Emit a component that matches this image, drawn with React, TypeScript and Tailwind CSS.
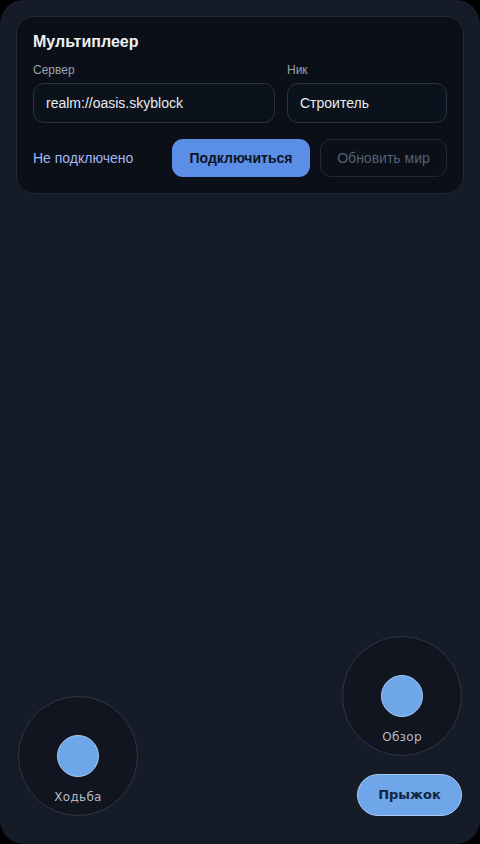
import React from "react";

function Joystick({ label }: { label: string }) {
  return (
    <div className="relative w-[120px] h-[120px] rounded-full bg-[#10151f] border border-[#2e3746]">
      <div className="absolute left-1/2 top-1/2 -translate-x-1/2 -translate-y-1/2 w-[42px] h-[42px] rounded-full bg-[#6ea6e9] border border-[#a6c8f2]" />
      <span className="absolute left-0 right-0 bottom-[10px] text-center text-[12px] leading-4 tracking-[0.3px] text-[#b4bac4] font-['DejaVu_Sans',sans-serif]">
        {label}
      </span>
    </div>
  );
}

export default function App() {
  return (
    <div className="w-[480px] h-[844px] bg-black">
      <div className="h-full rounded-[24px] bg-[#151b27] flex flex-col justify-between pt-4 px-4 pb-7 font-['Liberation_Sans',Arial,sans-serif]">
        <div className="rounded-[18px] bg-[#0b0f17] border border-[#1f2939] p-4">
          <h1 className="text-[16px] leading-[18px] font-bold text-[#eef1f6]">Мультиплеер</h1>
          <div className="mt-[11px] flex gap-3">
            <label className="flex-1 flex flex-col gap-[5px]">
              <span className="text-[12px] leading-4 text-[#9aa2ae]">Сервер</span>
              <div className="h-10 rounded-[11px] bg-[#0c121c] border border-[#273244] px-3 flex items-center text-[14px] text-[#e8ebf0]">
                realm://oasis.skyblock
              </div>
            </label>
            <label className="w-40 flex flex-col gap-[5px]">
              <span className="text-[12px] leading-4 text-[#9aa2ae]">Ник</span>
              <div className="h-10 rounded-[11px] bg-[#0c121c] border border-[#273244] px-3 flex items-center text-[14px] text-[#e8ebf0]">
                Строитель
              </div>
            </label>
          </div>
          <div className="mt-4 flex items-center gap-[10px]">
            <span className="flex-1 text-[14px] text-[#a3b8f2]">Не подключено</span>
            <button className="h-[38px] w-[138px] rounded-[11px] bg-[#5b8ee6] text-[14px] font-bold text-[#0c1422]">
              Подключиться
            </button>
            <button className="h-[38px] w-[127px] rounded-[11px] border border-[#1f2837] text-[14px] text-[#566173]">
              Обновить мир
            </button>
          </div>
        </div>
        <div className="flex justify-between items-end px-[2px]">
          <Joystick label="Ходьба" />
          <div className="flex flex-col items-end gap-[18px]">
            <Joystick label="Обзор" />
            <button className="h-[42px] w-[105px] rounded-full bg-[#6ea6e9] border border-[#a6c8f2] text-[13px] font-bold text-[#10233f] font-['DejaVu_Sans',sans-serif]">
              Прыжок
            </button>
          </div>
        </div>
      </div>
    </div>
  );
}
